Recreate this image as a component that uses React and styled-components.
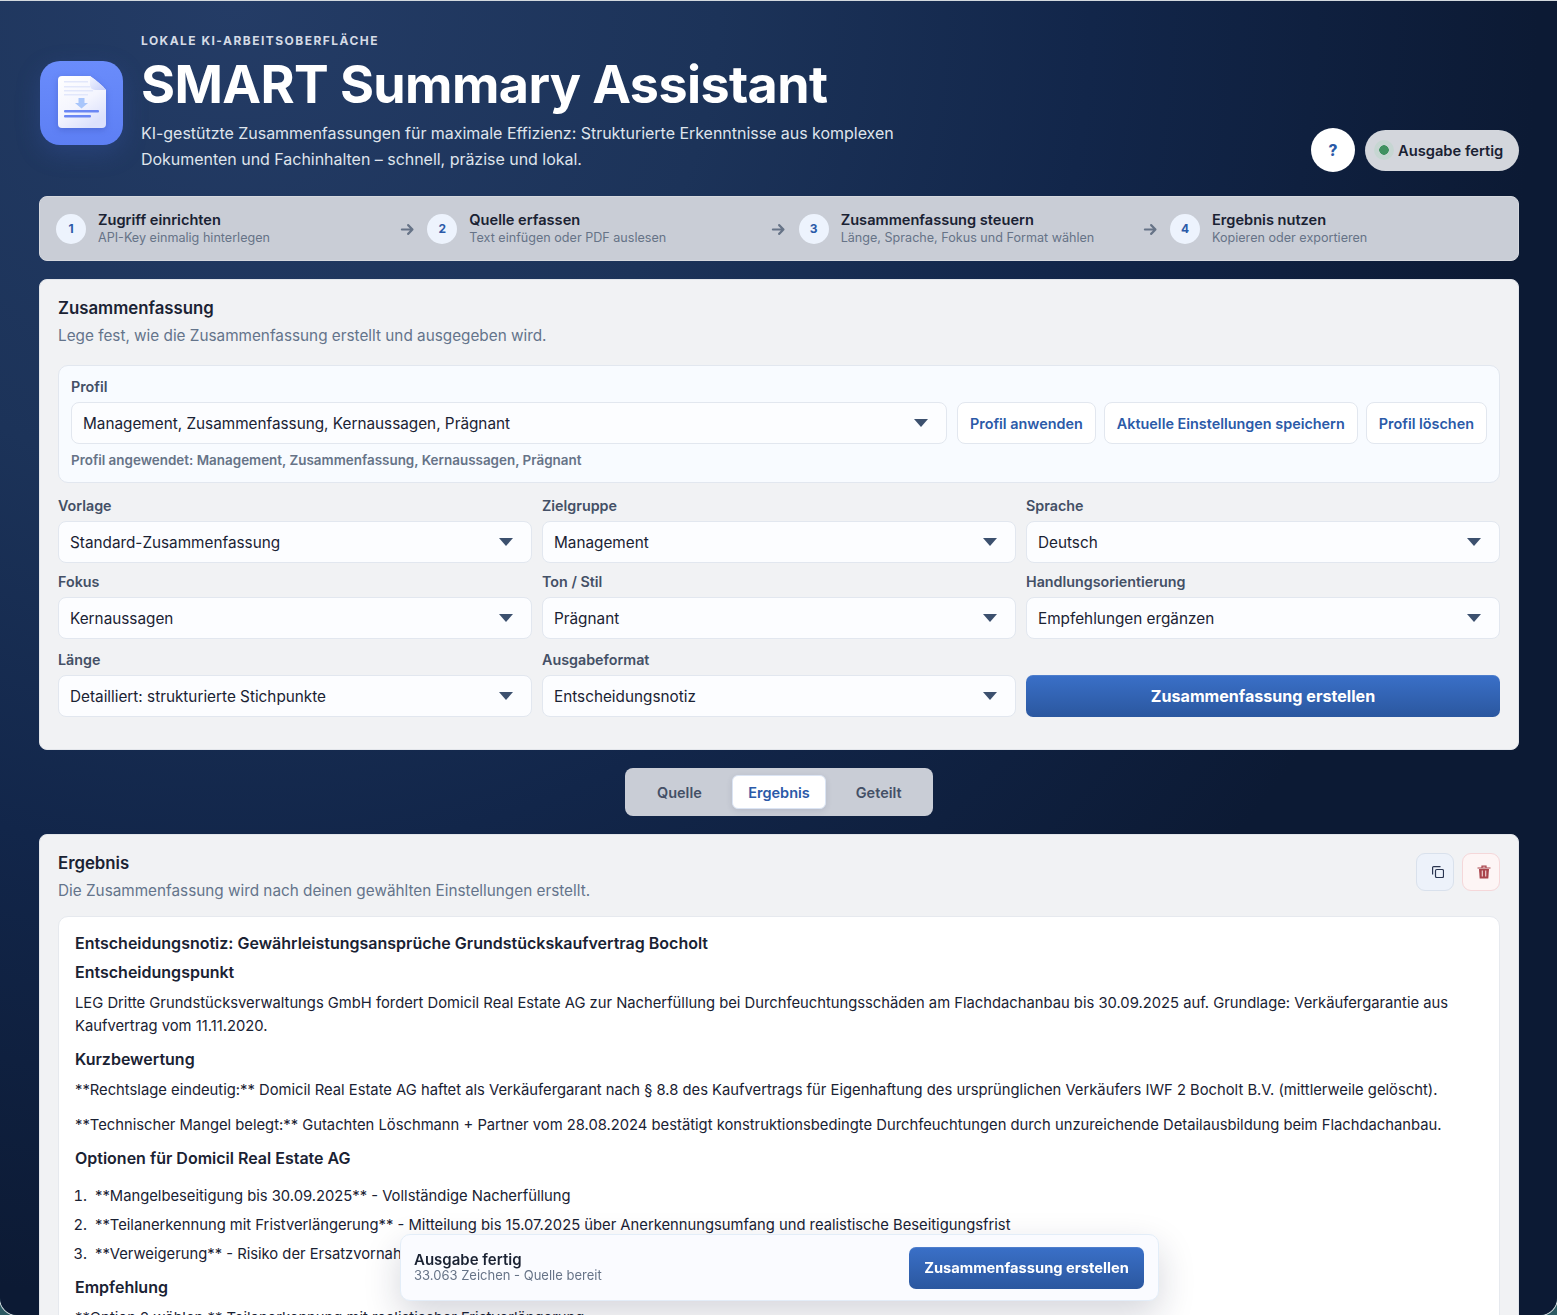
import React from "react";
import styled, { createGlobalStyle } from "styled-components";

const Global = createGlobalStyle`
  html, body { margin: 0; padding: 0; background: #2c5a63; }
  body { font-family: Inter, "Noto Sans", "Liberation Sans", sans-serif; color: #1a2233; overflow: hidden; height: 1315px; }
  * { box-sizing: border-box; }
`;

const Page = styled.div`
  height: 1314px;
  overflow: hidden;
  margin-top: 1px;
  padding: 32px 38px 0 39px;
  border-radius: 0 0 17px 17px;
  box-shadow: 0 0 0 1px #d3d9de;
  background: radial-gradient(circle at 15% 0%, #243c66 0%, #1c3359 26%, #12264a 46%, #0c1a34 70%);
`;
const Header = styled.header`
  display: flex;
  align-items: flex-end;
  justify-content: space-between;
  height: 139px;
`;
const Brand = styled.div`
  display: flex;
  align-items: center;
  gap: 18px;
`;
const LogoTile = styled.div`
  width: 83px;
  height: 84px;
  margin: 1px 0 0 1px;
  border-radius: 20px;
  background: linear-gradient(180deg, #6a8cfb 0%, #5d7ff4 100%);
  box-shadow: 0 8px 24px rgba(60, 90, 180, .3);
  display: flex;
  align-items: center;
  justify-content: center;
  svg { filter: drop-shadow(0 2px 3px rgba(50, 70, 170, .35)); margin-top: -3px; }
`;
const BrandText = styled.div`
  display: flex;
  flex-direction: column;
`;
const Eyebrow = styled.div`
  font-size: 12px;
  line-height: 15px;
  font-weight: 700;
  letter-spacing: 1.46px;
  color: #d5dbe6;
`;
const Title = styled.h1`
  margin: 6px 0 5px;
  font-size: 52px;
  line-height: 61px;
  font-weight: 700;
  letter-spacing: -0.6px;
  color: #fff;
`;
const Lead = styled.p`
  margin: 0;
  font-size: 16px;
  line-height: 26px;
  letter-spacing: -0.03px;
  color: #dfe4ec;
  max-width: 780px;
`;
const HeaderActions = styled.div`
  display: flex;
  align-items: center;
  gap: 10px;
`;
const HelpButton = styled.button`
  width: 44px;
  height: 44px;
  border-radius: 50%;
  border: 0;
  background: #fff;
  color: #2b5aa8;
  font: 800 15.500px Inter, sans-serif;
  padding: 0;
`;
const StatusPill = styled.div`
  height: 41px;
  width: 154px;
  border-radius: 21px;
  background: #d3d6dc;
  display: flex;
  align-items: center;
  gap: 4px;
  padding: 1px 0 0 9px;
  font-size: 14.700px;
  font-weight: 600;
  color: #1a2233;
`;
const StatusDot = styled.span`
  width: 20px;
  height: 20px;
  margin-top: -1px;
  border-radius: 50%;
  background: radial-gradient(circle, #3f9160 0 4.500px, #c6d6d2 5px);
`;
const Stepper = styled.nav`
  margin-top: 24px;
  height: 65px;
  background: #c9cdd6;
  border: 1px solid #d5d8de;
  border-radius: 8px;
  display: flex;
  align-items: center;
  padding-left: 16px;
  width: 1480px;
`;
const Step = styled.div`
  width: 371.330px;
  display: flex;
  align-items: center;
  gap: 12px;
  position: relative;
  flex: none;
`;
const StepNum = styled.span`
  width: 30px;
  height: 30px;
  border-radius: 50%;
  background: #edf3fd;
  color: #2b5aa8;
  font-size: 12px;
  font-weight: 700;
  display: flex;
  align-items: center;
  justify-content: center;
  flex: none;
`;
const StepText = styled.div`
  padding-top: 1px;
`;
const StepTitle = styled.div`
  font-size: 14.600px;
  line-height: 16px;
  font-weight: 600;
  color: #1a2233;
`;
const StepSub = styled.div`
  margin-top: 1px;
  font-size: 12.600px;
  line-height: 18px;
  color: #667387;
`;
const StepArrow = styled.span`
  position: absolute;
  left: 344px;
  top: 11px;
  color: #667387;
  display: flex;
`;
const Card = styled.section`
  margin-top: 18px;
  width: 1480px;
  background: #f1f2f4;
  border: 1px solid #e2e5ea;
  border-radius: 8px;
  padding: 17px 18px ${p => p.$pb || 18}px;
`;
const CardTitle = styled.h2`
  margin: 0;
  font-size: 16.800px;
  line-height: 22px;
  font-weight: 600;
  color: #1a2233;
`;
const CardDesc = styled.p`
  margin: 6px 0 0;
  font-size: 15.300px;
  line-height: 22px;
  color: #64748b;
`;
const ProfileBox = styled.div`
  margin-top: 18px;
  height: 118px;
  background: #f8fbff;
  border: 1px solid #e2e7ef;
  border-radius: 10px;
  padding: 12px;
`;
const FieldLabel = styled.div`
  font-size: 14.300px;
  line-height: 18px;
  font-weight: 600;
  color: #445066;
`;
const ProfileRow = styled.div`
  margin-top: 6px;
  display: flex;
  gap: 8px;
`;
const SelectBox = styled.div`
  height: 42px;
  flex: ${p => (p.$grow ? 1 : "none")};
  margin-right: ${p => (p.$grow ? 2 : 0)}px;
  margin-top: ${p => p.$mt ?? 6}px;
  background: #fcfdff;
  border: 1px solid #e2e7ef;
  border-radius: 8px;
  padding: 0 18px 0 11px;
  display: flex;
  align-items: center;
  justify-content: space-between;
  font-size: 15.300px;
  color: #1a2233;
`;
const Caret = styled.span`
  width: 0;
  height: 0;
  border-left: 7.500px solid transparent;
  border-right: 7.500px solid transparent;
  border-top: 8px solid #3c506e;
`;
const GhostButton = styled.button`
  height: 42px;
  padding: 0 12px;
  background: #fff;
  border: 1px solid #e2e7ef;
  border-radius: 8px;
  color: #2b5aa8;
  font: 600 14.400px Inter, sans-serif;
  white-space: nowrap;
`;
const ProfileNote = styled.div`
  margin-top: 8px;
  font-size: 13.440px;
  line-height: 16px;
  font-weight: 600;
  color: #667387;
`;
const FieldGrid = styled.div`
  margin-top: 14px;
  display: grid;
  grid-template-columns: repeat(3, 474px);
  grid-template-rows: 66px 68px 66px;
  column-gap: 10px;
  row-gap: 10px;
  align-items: start;
`;
const PrimaryButton = styled.button`
  height: 42px;
  width: ${p => p.$w || "100%"};
  align-self: ${p => (p.$end ? "end" : "center")};
  border: 0;
  border-radius: 7px;
  background: linear-gradient(180deg, #3a70c8 0%, #2b579f 100%);
  color: #fff;
  font: 700 ${p => p.$size || 16.100}px Inter, sans-serif;
  box-shadow: inset 0 1px 0 rgba(255,255,255,.1);
  padding: 0;
`;
const TabsWrap = styled.div`
  margin-top: 18px;
  width: 1480px;
  display: flex;
  justify-content: center;
`;
const Tabs = styled.div`
  width: 308px;
  height: 48px;
  background: #c9cdd6;
  border-radius: 8px;
  padding: 7px;
  display: flex;
  gap: 5px;
`;
const Tab = styled.button`
  flex: 1;
  height: 34px;
  border: ${p => (p.$active ? "1px solid #dbe4f3" : "1px solid transparent")};
  border-radius: 6px;
  background: ${p => (p.$active ? "#fff" : "transparent")};
  box-shadow: ${p => (p.$active ? "0 2px 6px rgba(40,60,100,.12)" : "none")};
  color: ${p => (p.$active ? "#2b5aa8" : "#445066")};
  font: 600 14.500px Inter, sans-serif;
  padding: 0;
`;
const ResultHead = styled.div`
  display: flex;
  justify-content: space-between;
`;
const IconActions = styled.div`
  display: flex;
  gap: 8px;
  margin-top: 1px;
`;
const IconButton = styled.button`
  width: 38px;
  height: 38px;
  border-radius: 9px;
  border: 1px solid ${p => (p.$danger ? "#f5d7d9" : "#d9e1ec")};
  background: ${p => (p.$danger ? "#fdf5f5" : "#edf2fa")};
  display: flex;
  align-items: center;
  justify-content: center;
  padding: 0 0 0 6px;
`;
const Output = styled.article`
  margin-top: 14px;
  background: #fff;
  border: 1px solid #e6e9ee;
  border-radius: 10px;
  padding: 14px 16px;
  height: 500px;
  font-size: 14.780px;
  line-height: 23px;
  color: #1a2233;
`;
const OutTitle = styled.h3`
  margin: 0;
  font-size: 16px;
  line-height: 24px;
  font-weight: 600;
`;
const OutHead = styled.h4`
  margin: ${p => p.$mt ?? -2}px 0 9px;
  font-size: 16px;
  line-height: 22px;
  font-weight: 600;
`;
const Para = styled.p`
  margin: 0 0 12px;
`;
const NumList = styled.ol`
  margin: 16px 0 0;
  padding-left: 20px;
  li { margin-bottom: 6px; padding-left: 0; }
  li::marker { content: counter(list-item) ".\\00a0\\00a0"; }
`;
const FloatBar = styled.div`
  position: fixed;
  left: 400px;
  top: 1234px;
  width: 759px;
  height: 67px;
  background: #fafbff;
  border: 1px solid #e3edf8;
  border-radius: 10px;
  box-shadow: 0 14px 36px rgba(20, 30, 60, .18);
  padding: 0 14px 0 13px;
  display: flex;
  align-items: center;
  justify-content: space-between;
`;
const FloatText = styled.div`
  margin-top: -2px;
`;
const FloatTitle = styled.div`
  font-size: 15px;
  line-height: 17px;
  font-weight: 600;
  color: #1a2233;
`;
const FloatSub = styled.div`
  font-size: 13px;
  line-height: 15px;
  color: #667387;
`;

const Logo = () => (
  <svg width="48" height="52" viewBox="0 0 48 52">
    <defs>
      <linearGradient id="pg" x1="0" y1="0" x2="0.6" y2="1">
        <stop offset="0" stopColor="#ffffff" />
        <stop offset="0.6" stopColor="#f4f5fe" />
        <stop offset="1" stopColor="#dce1fc" />
      </linearGradient>
      <linearGradient id="fg" x1="0" y1="0" x2="1" y2="1">
        <stop offset="0" stopColor="#f3f5ff" />
        <stop offset="1" stopColor="#c7d0f9" />
      </linearGradient>
    </defs>
    <path d="M4 0H32C38 4 44 9 48 14V48a4 4 0 0 1-4 4H4a4 4 0 0 1-4-4V4a4 4 0 0 1 4-4Z" fill="url(#pg)" />
    <path d="M32 0C38 4 44 9 48 14H37a5 5 0 0 1-5-5Z" fill="url(#fg)" />
    <g fill="#e2e7fb">
      <rect x="6" y="5" width="24" height="1.500" />
      <rect x="6" y="10" width="26" height="1.500" />
      <rect x="6" y="14" width="29" height="1.500" />
      <rect x="6" y="18" width="24" height="1.500" />
    </g>
    <path d="M20.500 22h6v5h3.500l-6.500 5.500-6.500-5.500h3.500Z" fill="#a9c6fb" />
    <rect x="6" y="34" width="35" height="2.500" rx="1" fill="#6a86f4" />
    <rect x="6" y="39" width="27" height="2.500" rx="1" fill="#6a86f4" />
  </svg>
);

const ArrowIcon = () => (
  <svg width="15" height="15" viewBox="0 0 24 24" fill="none" stroke="currentColor" strokeWidth="3.400" strokeLinecap="round" strokeLinejoin="round">
    <path d="M3 12h17M13 5l7 7-7 7" />
  </svg>
);

const CopyIcon = () => (
  <svg width="12" height="12" viewBox="0 0 12 12" fill="none" stroke="#2a3550" strokeWidth="1.200">
    <rect x="3.500" y="3.500" width="8" height="8" rx="1.300" />
    <path d="M0.600 8.500V1.600a1 1 0 0 1 1-1H8.500" />
  </svg>
);

const TrashIcon = () => (
  <svg width="14" height="14" viewBox="0 0 14 14" fill="none">
    <path d="M0.500 3h13M5 3V1.200h4V3" stroke="#a9434b" strokeWidth="1.200" />
    <path d="M2 4h10l-.7 9.500H2.700Z" fill="#a9434b" />
    <path d="M5.300 5.500v6M8.700 5.500v6" stroke="#f4d9da" strokeWidth="1.100" />
  </svg>
);

const Select = ({ children, grow, mt }) => (
  <SelectBox $grow={grow} $mt={mt}>
    <span>{children}</span>
    <Caret />
  </SelectBox>
);

const Field = ({ label, value }) => (
  <div>
    <FieldLabel>{label}</FieldLabel>
    <Select>{value}</Select>
  </div>
);

const steps = [
  ["1", "Zugriff einrichten", "API-Key einmalig hinterlegen"],
  ["2", "Quelle erfassen", "Text einfügen oder PDF auslesen"],
  ["3", "Zusammenfassung steuern", "Länge, Sprache, Fokus und Format wählen"],
  ["4", "Ergebnis nutzen", "Kopieren oder exportieren"],
];

export default function App() {
  return (
    <Page>
      <Global />
      <Header>
        <Brand>
          <LogoTile><Logo /></LogoTile>
          <BrandText>
            <Eyebrow>LOKALE KI-ARBEITSOBERFLÄCHE</Eyebrow>
            <Title>SMART Summary Assistant</Title>
            <Lead>
              KI-gestützte Zusammenfassungen für maximale Effizienz: Strukturierte Erkenntnisse aus komplexen
              Dokumenten und Fachinhalten – schnell, präzise und lokal.
            </Lead>
          </BrandText>
        </Brand>
        <HeaderActions>
          <HelpButton>?</HelpButton>
          <StatusPill><StatusDot />Ausgabe fertig</StatusPill>
        </HeaderActions>
      </Header>

      <Stepper>
        {steps.map(([n, t, s], i) => (
          <Step key={n}>
            <StepNum>{n}</StepNum>
            <StepText>
              <StepTitle>{t}</StepTitle>
              <StepSub>{s}</StepSub>
            </StepText>
            {i < 3 && <StepArrow><ArrowIcon /></StepArrow>}
          </Step>
        ))}
      </Stepper>

      <Card $pb={32}>
        <CardTitle>Zusammenfassung</CardTitle>
        <CardDesc>Lege fest, wie die Zusammenfassung erstellt und ausgegeben wird.</CardDesc>
        <ProfileBox>
          <FieldLabel>Profil</FieldLabel>
          <ProfileRow>
            <Select grow mt={0}>Management, Zusammenfassung, Kernaussagen, Prägnant</Select>
            <GhostButton>Profil anwenden</GhostButton>
            <GhostButton>Aktuelle Einstellungen speichern</GhostButton>
            <GhostButton>Profil löschen</GhostButton>
          </ProfileRow>
          <ProfileNote>Profil angewendet: Management, Zusammenfassung, Kernaussagen, Prägnant</ProfileNote>
        </ProfileBox>
        <FieldGrid>
          <Field label="Vorlage" value="Standard-Zusammenfassung" />
          <Field label="Zielgruppe" value="Management" />
          <Field label="Sprache" value="Deutsch" />
          <Field label="Fokus" value="Kernaussagen" />
          <Field label="Ton / Stil" value="Prägnant" />
          <Field label="Handlungsorientierung" value="Empfehlungen ergänzen" />
          <Field label="Länge" value="Detailliert: strukturierte Stichpunkte" />
          <Field label="Ausgabeformat" value="Entscheidungsnotiz" />
          <PrimaryButton $end>Zusammenfassung erstellen</PrimaryButton>
        </FieldGrid>
      </Card>

      <TabsWrap>
        <Tabs>
          <Tab>Quelle</Tab>
          <Tab $active>Ergebnis</Tab>
          <Tab>Geteilt</Tab>
        </Tabs>
      </TabsWrap>

      <Card>
        <ResultHead>
          <div>
            <CardTitle>Ergebnis</CardTitle>
            <CardDesc>Die Zusammenfassung wird nach deinen gewählten Einstellungen erstellt.</CardDesc>
          </div>
          <IconActions>
            <IconButton aria-label="Kopieren"><CopyIcon /></IconButton>
            <IconButton $danger aria-label="Löschen"><TrashIcon /></IconButton>
          </IconActions>
        </ResultHead>
        <Output>
          <OutTitle>Entscheidungsnotiz: Gewährleistungsansprüche Grundstückskaufvertrag Bocholt</OutTitle>
          <OutHead $mt={6}>Entscheidungspunkt</OutHead>
          <Para>
            LEG Dritte Grundstücksverwaltungs GmbH fordert Domicil Real Estate AG zur Nacherfüllung bei Durchfeuchtungsschäden am Flachdachanbau bis 30.09.2025 auf. Grundlage: Verkäufergarantie aus Kaufvertrag vom 11.11.2020.
          </Para>
          <OutHead>Kurzbewertung</OutHead>
          <Para>**Rechtslage eindeutig:** Domicil Real Estate AG haftet als Verkäufergarant nach § 8.8 des Kaufvertrags für Eigenhaftung des ursprünglichen Verkäufers IWF 2 Bocholt B.V. (mittlerweile gelöscht).</Para>
          <Para>**Technischer Mangel belegt:** Gutachten Löschmann + Partner vom 28.08.2024 bestätigt konstruktionsbedingte Durchfeuchtungen durch unzureichende Detailausbildung beim Flachdachanbau.</Para>
          <OutHead>Optionen für Domicil Real Estate AG</OutHead>
          <NumList>
            <li>**Mangelbeseitigung bis 30.09.2025** - Vollständige Nacherfüllung</li>
            <li>**Teilanerkennung mit Fristverlängerung** - Mitteilung bis 15.07.2025 über Anerkennungsumfang und realistische Beseitigungsfrist</li>
            <li>**Verweigerung** - Risiko der Ersatzvornahme</li>
          </NumList>
          <OutHead $mt={10}>Empfehlung</OutHead>
          <Para>**Option 2 wählen:** Teilanerkennung mit realistischer Fristverlängerung</Para>
        </Output>
      </Card>

      <FloatBar>
        <FloatText>
          <FloatTitle>Ausgabe fertig</FloatTitle>
          <FloatSub>33.063 Zeichen - Quelle bereit</FloatSub>
        </FloatText>
        <PrimaryButton $w="235px" $size={14.700}>Zusammenfassung erstellen</PrimaryButton>
      </FloatBar>
    </Page>
  );
}
